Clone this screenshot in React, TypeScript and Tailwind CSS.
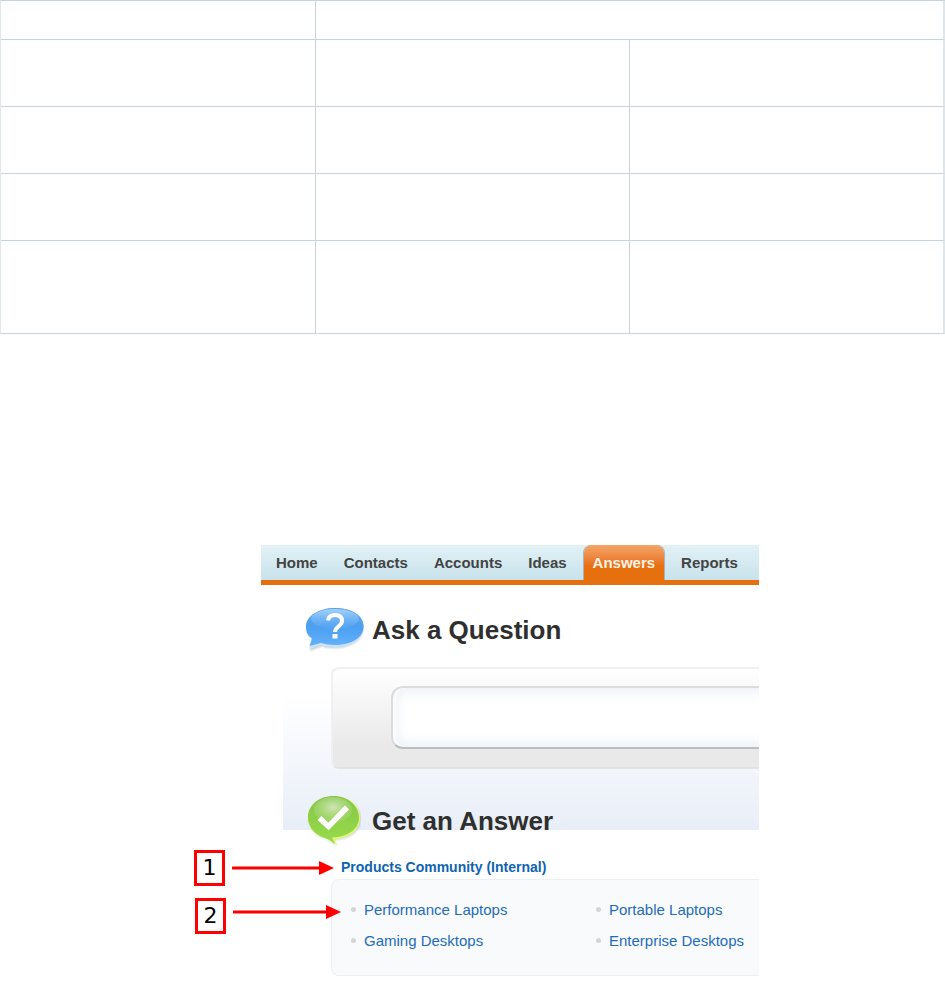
import { JSX } from "react";

const tabs = ["Home", "Contacts", "Accounts", "Ideas", "Answers", "Reports"];

const topics = [
  "Performance Laptops",
  "Portable Laptops",
  "Gaming Desktops",
  "Enterprise Desktops",
];

const rowHeights = ["h-[67px]", "h-[67px]", "h-[67px]", "h-[93px]"];

function EmptyTable(): JSX.Element {
  return (
    <table className="w-full table-fixed border-separate border-spacing-0 border-t border-l border-t-[#c9d4da] border-l-[#e0e6ea]">
      <tbody>
        <tr>
          <td className="h-[39px] border-r border-b border-[#c9d4da]"></td>
          <td colSpan={2} className="h-[39px] border-r-2 border-b border-b-[#c9d4da] border-r-[#dfe6ea]"></td>
        </tr>
        {rowHeights.map((height, i) => (
          <tr key={i}>
            <td className={`${height} border-r border-b border-[#c9d4da]`}></td>
            <td className={`${height} border-r border-b border-[#c9d4da]`}></td>
            <td className={`${height} border-r-2 border-b border-b-[#c9d4da] border-r-[#dfe6ea]`}></td>
          </tr>
        ))}
      </tbody>
    </table>
  );
}

function QuestionIcon(): JSX.Element {
  return (
    <svg width="60" height="46" viewBox="0 0 60 46" className="shrink-0" aria-hidden="true">
      <defs>
        <linearGradient id="blue" x1="0" y1="0" x2="0" y2="1">
          <stop offset="0" stopColor="#5ea6ea" />
          <stop offset="0.5" stopColor="#4c9ff2" />
          <stop offset="1" stopColor="#63b1fa" />
        </linearGradient>
        <linearGradient id="blueShine" x1="0" y1="0" x2="0" y2="1">
          <stop offset="0" stopColor="#a5d2fb" />
          <stop offset="1" stopColor="#5fabf5" stopOpacity="0.3" />
        </linearGradient>
        <filter id="soft" x="-20%" y="-20%" width="140%" height="150%">
          <feGaussianBlur stdDeviation="1" />
        </filter>
      </defs>
      <path d="M30 3C14 3 2 11 2 21c0 6 2 9 6 12L5 44l12-5c4 2 8 2 13 2 16 0 28-8 28-19S46 3 30 3z" fill="#9aa7b4" opacity="0.6" filter="url(#soft)" />
      <path d="M30 1C14 1 1 9 1 20c0 6 2 9 6 13L4 42l12-4c4 1 9 2 14 2 16 0 29-8 29-20S46 1 30 1z" fill="#c9e4fb" />
      <path d="M30 1C14 1 1 9 1 19.500c0 6 2 9 6 12L4.500 39 16 36c4 1 9 2 14 2 16 0 28.500-7 28.500-18.500S46 1 30 1z" fill="url(#blue)" />
      <ellipse cx="30" cy="12" rx="24" ry="10" fill="url(#blueShine)" />
      <path d="M23 13.500c.5-3.500 3-5.500 7-5.500 4.500 0 7 2.300 7 6 0 5-7 5.500-7 11" fill="none" stroke="#fff" strokeWidth="4" />
      <rect x="27.500" y="27" width="5" height="4.500" fill="#fff" />
    </svg>
  );
}

function AnswerIcon(): JSX.Element {
  return (
    <svg width="54" height="52" viewBox="0 0 54 52" className="shrink-0" aria-hidden="true">
      <defs>
        <linearGradient id="green" x1="0" y1="0" x2="0" y2="1">
          <stop offset="0" stopColor="#86c44c" />
          <stop offset="0.5" stopColor="#8fd048" />
          <stop offset="1" stopColor="#97dc4c" />
        </linearGradient>
        <radialGradient id="greenShine" cx="0.5" cy="0.4" r="0.6">
          <stop offset="0" stopColor="#cfe6b8" />
          <stop offset="1" stopColor="#a5d873" stopOpacity="0.3" />
        </radialGradient>
      </defs>
      <path d="M28 3C13 3 2 12 2 24c0 10 7 17 17 20 4 2 7 4 10 7l-2-6c16 0 27-9 27-21S43 3 28 3z" fill="#8f9b84" opacity="0.4" filter="url(#soft)" />
      <path d="M27 1C12 1 1 10 1 23c0 10 7 17 17 20 4 2 8 4 13 8l-4-7c15-1 26-9 26-21S42 1 27 1z" fill="#e2fb62" />
      <path d="M26.500 1C12 1 1 10 1 22.500 1 32 8 40 18 43c4 1 6 3 10 6l-3-6.500c16-.5 27-8.500 27-20S41 1 26.500 1z" fill="url(#green)" />
      <ellipse cx="26" cy="15" rx="19" ry="13" fill="url(#greenShine)" />
      <path d="M12.500 23l9 8.500L40 12.500" fill="none" stroke="#fff" strokeWidth="5.500" />
    </svg>
  );
}

interface CalloutProps {
  label: string;
  place: string;
  length: number;
  lineY: number;
}

// numbered box with a red arrow that points into the page
function Callout({ label, place, length, lineY }: CalloutProps): JSX.Element {
  return (
    <div className={`absolute flex gap-[7px] ${place}`}>
      <span className="flex h-9 w-[31px] items-center justify-center border-[3px] border-[#ff0000] bg-white font-['DejaVu_Sans',sans-serif] text-[22px] leading-none text-black">
        {label}
      </span>
      <svg width={length} height="36" viewBox={`0 0 ${length} 36`} aria-hidden="true">
        <path d={`M1 ${lineY}H${length - 12}`} stroke="#ff0000" strokeWidth="3" strokeLinecap="round" />
        <path d={`M${length - 15} ${lineY - 7}L${length} ${lineY}L${length - 15} ${lineY + 7}Z`} fill="#ff0000" />
      </svg>
    </div>
  );
}

export default function App(): JSX.Element {
  return (
    <div className="bg-white pb-4 font-['Liberation_Sans',Arial,sans-serif]">
      <EmptyTable />

      <main className="relative mx-auto mt-[211px] max-w-[573px] pl-[75px]">
        <nav className="flex h-10 gap-2 border-b-[5px] border-[#e66f0e] bg-linear-to-b from-[#e2f1f6] to-[#c8e2eb] pl-[6px]">
          {tabs.map((tab) => (
            <a
              key={tab}
              href="#"
              className={
                tab === "Answers"
                  ? "rounded-t-lg bg-linear-to-b from-[#f3a568] to-[#e66f0e] to-60% px-[9px] text-[15px] leading-[35px] font-bold text-[#fff3e6] shadow-[1px_0_0_#a9b5b8,-1px_0_0_#a9b5b8]"
                  : "px-[9px] text-[15px] leading-[35px] font-bold text-[#434343]"
              }
            >
              {tab}
            </a>
          ))}
        </nav>

        {/* Ask */}
        <div className="ml-[22px] bg-[linear-gradient(#fff_110px,#e8eef8_245px,#fff_245px)] pt-[22px] pl-[22px]">
          <div className="flex items-center gap-[7px]">
            <QuestionIcon />
            <h1 className="text-[26px] leading-8 font-bold text-[#2f2f2f]">
              <label htmlFor="question">Ask a Question</label>
            </h1>
          </div>
          <div className="mt-[14px] ml-[26px] h-[102px] overflow-hidden rounded-l-lg border-2 border-r-0 border-[#f0f0f0] border-b-[#e2e2e2] bg-linear-to-b from-white to-[#e9e9e9] to-80% pt-[17px] pl-[58px]">
            <input
              id="question"
              type="text"
              className="block h-[63px] w-[calc(100%+24px)] rounded-l-xl border-2 border-[#dcdcdc] border-b-[#bdbdbd] bg-white px-4 text-xl shadow-[inset_3px_0_0_#fbfcfe,inset_0_0_12px_5px_#edf2f8] outline-none"
            />
          </div>

          {/* Answer */}
          <div className="mt-[26px] ml-[2px] flex items-center gap-[11px]">
            <AnswerIcon />
            <h1 className="text-[26px] leading-8 font-bold text-[#2f2f2f]">Get an Answer</h1>
          </div>
        </div>

        <section className="ml-[70px]">
          <h2 className="mt-[11px] ml-[10px] text-[14px] leading-[18px] font-bold text-[#0f64b0]">
            <a href="#">Products Community (Internal)</a>
          </h2>
          <ul className="mt-[3px] grid grid-cols-[245px_1fr] rounded-l-lg border border-r-0 border-[#ebf0f4] bg-[#f8fafc] pt-[14px] pb-[19px] pl-[19px]">
            {topics.map((topic) => (
              <li key={topic} className="flex items-center gap-2 whitespace-nowrap">
                <span className="size-[5px] rounded-full bg-[#d3d5d8]"></span>
                <a href="#" className="text-[15px] leading-[31px] text-[#1f6cb8]">{topic}</a>
              </li>
            ))}
          </ul>
        </section>

        <Callout label="1" place="top-[305px] left-2" length={102} lineY={18} />
        <Callout label="2" place="top-[353px] left-[9px]" length={108} lineY={14} />
      </main>
    </div>
  );
}
